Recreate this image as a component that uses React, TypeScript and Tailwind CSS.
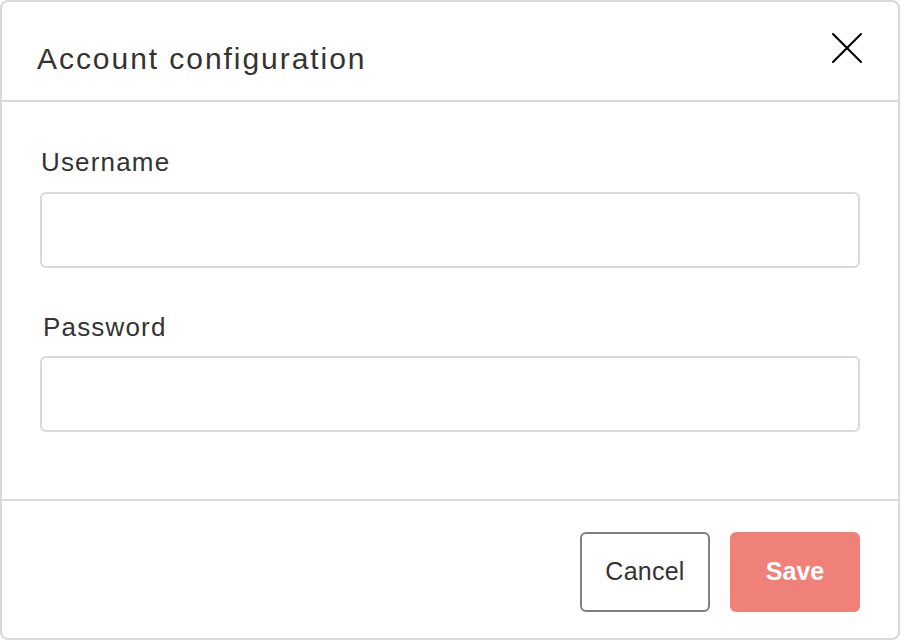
import { X } from 'lucide-react';

export default function App() {
    return (
        <div className="w-[900px] h-[640px] bg-white" style={{ fontFamily: '"Liberation Sans", Arial, sans-serif' }}>
            <div className="w-full h-full flex flex-col border-2 border-[#d9d9d9] rounded-[8px] text-[#333333]">
                {/* Header */}
                <div className="h-[100px] shrink-0 flex items-start justify-between border-b-2 border-[#d9d9d9] pl-[35px] pr-[23px]">
                    <h1 className="mt-[39px] text-[30px] leading-[36px] tracking-[0.065em]">Account configuration</h1>
                    <button className="mt-[18px] text-black">
                        <X size={56} strokeWidth={0.9} />
                    </button>
                </div>

                {/* Body */}
                <div className="flex-1 flex flex-col px-[38px] pt-[44px]">
                    <label className="text-[26px] leading-[32px] tracking-[0.045em] pl-[1px]">Username</label>
                    <input className="mt-[14px] h-[76px] w-full border-2 border-[#dadada] rounded-[6px] outline-none" />
                    <label className="mt-[43px] text-[26px] leading-[32px] tracking-[0.045em] pl-[3px]">Password</label>
                    <input className="mt-[13px] h-[76px] w-full border-2 border-[#dadada] rounded-[6px] outline-none" />
                </div>

                {/* Footer */}
                <div className="h-[139px] shrink-0 flex items-start justify-end gap-[20px] border-t-2 border-[#d9d9d9] pr-[38px] pt-[31px]">
                    <button className="w-[130px] h-[80px] border-2 border-[#808080] rounded-[6px] bg-white text-[25px] tracking-[0.01em] text-[#333333]">
                        Cancel
                    </button>
                    <button className="w-[130px] h-[80px] rounded-[6px] bg-[#f08178] text-[25px] font-semibold text-white">
                        Save
                    </button>
                </div>
            </div>
        </div>
    );
}
